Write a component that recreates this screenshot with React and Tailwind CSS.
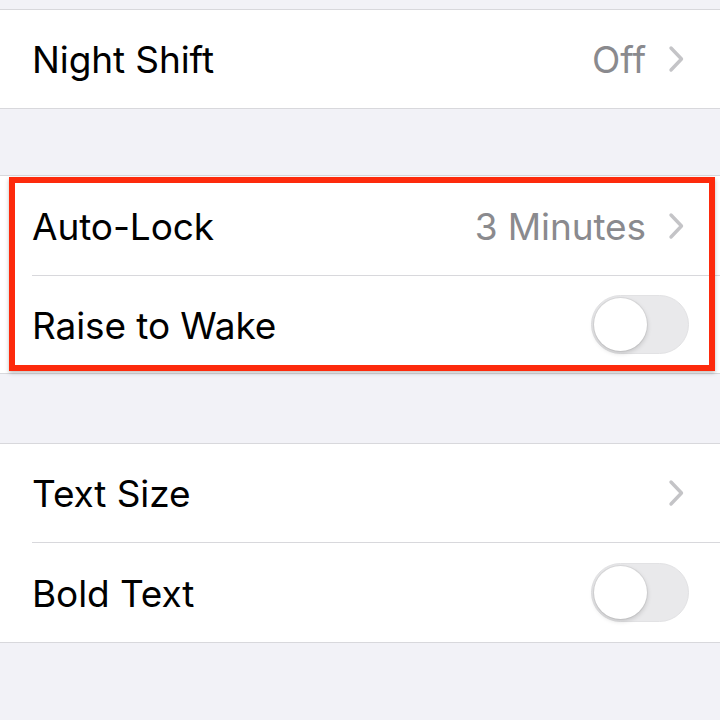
import React from "react";

const font = { fontFamily: "Inter, 'Noto Sans', sans-serif" };

function Chevron() {
  return (
    <svg width="20" height="30" viewBox="0 0 20 30" className="shrink-0">
      <path d="M5 4 L15.5 15 L5 26" fill="none" stroke="#c4c4c7" strokeWidth="3.4" strokeLinecap="round" strokeLinejoin="round" />
    </svg>
  );
}

function Toggle() {
  return (
    <div className="relative w-[98px] h-[59px] rounded-full bg-[#e9e9eb] border border-[#e2e2e4]">
      <div className="absolute left-[2px] top-[2px] w-[53px] h-[53px] rounded-full bg-white shadow-[0_2px_5px_rgba(0,0,0,0.18),0_0_0_1px_rgba(0,0,0,0.05)]" />
    </div>
  );
}

function Row({ label, value, chevron, toggle, sep, h = "h-[98px]" }) {
  return (
    <div className="pl-[32px]">
      <div className={`flex items-center ${h} pr-[34px] ${sep ? "border-b border-[#d8d8dc]" : ""}`}>
        <span className="flex-1 text-[37px] text-black tracking-[-0.1px] pt-[2px]">{label}</span>
        {value && <span className="text-[37px] text-[#8a8a8e] mr-[20px] tracking-[-0.1px] pt-[2px]">{value}</span>}
        {chevron && <Chevron />}
        {toggle && <div className="-mr-[3px]"><Toggle /></div>}
      </div>
    </div>
  );
}

export default function App() {
  return (
    <div className="w-[720px] h-[720px] bg-[#f2f2f7] overflow-hidden" style={font}>
      <div className="h-[9px]" />
      <div className="bg-white border-y border-[#d8d8dc]">
        <Row label="Night Shift" value="Off" chevron />
      </div>
      <div className="h-[66px]" />
      <div className="relative bg-white border-y border-[#d8d8dc]">
        <Row label="Auto-Lock" value="3 Minutes" chevron sep h="h-[100px]" />
        <Row label="Raise to Wake" toggle h="h-[97px]" />
        <div className="absolute top-[1px] left-[9px] right-[5px] bottom-[2px] border-[6px] border-[#fd2a0c] shadow-[0_2px_4px_rgba(0,0,0,0.25)]" />
      </div>
      <div className="h-[69px]" />
      <div className="bg-white border-y border-[#d8d8dc]">
        <Row label="Text Size" chevron sep h="h-[99px]" />
        <Row label="Bold Text" toggle h="h-[99px]" />
      </div>
    </div>
  );
}
